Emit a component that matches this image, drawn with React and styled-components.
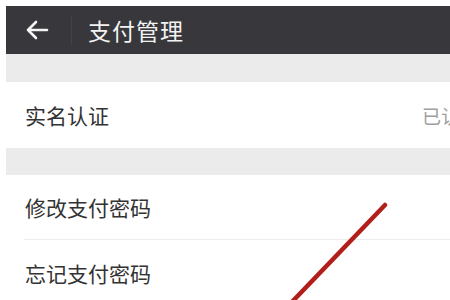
import React from "react";
import styled, { createGlobalStyle } from "styled-components";

const Global = createGlobalStyle`
  html, body { margin: 0; padding: 0; background: #fff; }
  body { font-family: "Noto Sans CJK SC", "Noto Sans", sans-serif; overflow: hidden; }
`;

const Page = styled.div`
  position: relative;
  width: 450px;
  height: 300px;
  overflow: hidden;
  padding: 6px 0 0 6px;
  box-sizing: border-box;
  background: #fff;
`;

const Header = styled.div`
  height: 48px;
  background: #37373c;
  display: flex;
  align-items: center;
`;

const BackButton = styled.div`
  width: 66px;
  height: 30px;
  display: flex;
  align-items: center;
  justify-content: center;
  border-right: 1px solid #414147;
  box-sizing: border-box;
  padding-right: 4px;
`;

const Title = styled.div`
  color: #f2f2f2;
  font-size: 23px;
  margin-left: 16px;
  letter-spacing: 1px;
  line-height: 1;
`;

const Gap = styled.div`
  height: ${(p) => p.h}px;
  background: #ebebeb;
`;

const Row = styled.div`
  height: ${(p) => p.h}px;
  display: flex;
  align-items: center;
  justify-content: space-between;
  background: #fff;
  border-bottom: ${(p) => (p.divider ? "1px solid #ececec" : "none")};
  margin-left: ${(p) => (p.divider ? "18px" : "0")};
  padding-left: ${(p) => (p.divider ? "1px" : "19px")};
  box-sizing: border-box;
  white-space: nowrap;
  overflow: hidden;
`;

const Label = styled.span`
  color: #333;
  font-size: 21px;
  line-height: 1;
`;

const Value = styled.span`
  color: #a0a0a0;
  font-size: 19px;
  line-height: 1;
  margin-right: -29px;
`;

const Annotation = styled.svg`
  position: absolute;
  left: 0;
  top: 0;
  pointer-events: none;
`;

export default function App() {
  return (
    <>
      <Global />
      <Page>
        <Header>
          <BackButton>
            <svg width="24" height="20" viewBox="0 0 24 20">
              <path d="M22 10H3M11 2L3 10l8 8" fill="none" stroke="#f4f4f4" strokeWidth="2.6" strokeLinecap="round" strokeLinejoin="round" />
            </svg>
          </BackButton>
          <Title>支付管理</Title>
        </Header>
        <Gap h={28} />
        <Row h={66}>
          <Label>实名认证</Label>
          <Value>已认证</Value>
        </Row>
        <Gap h={27} />
        <Row h={65} divider>
          <Label>修改支付密码</Label>
        </Row>
        <Row h={66}>
          <Label>忘记支付密码</Label>
        </Row>
        <Annotation width="450" height="300" viewBox="0 0 450 300">
          <line x1="385" y1="205" x2="290" y2="304" stroke="#b21f1a" strokeWidth="4.5" strokeLinecap="round" />
        </Annotation>
      </Page>
    </>
  );
}
